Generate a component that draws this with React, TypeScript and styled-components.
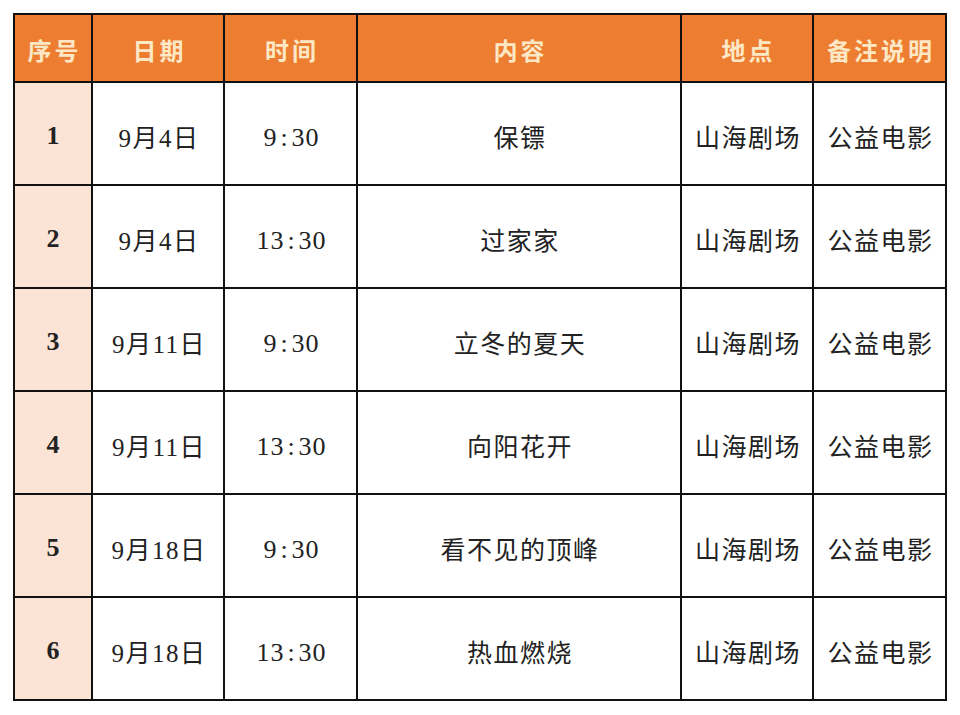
import { Fragment } from 'react';
import styled, { createGlobalStyle } from 'styled-components';

const GlobalStyle = createGlobalStyle`
  body {
    margin: 0;
    background: #ffffff;
  }
`;

const Page = styled.div`
  padding: 13px 0 0 13px;
`;

// black background + 2px gap draws the grid lines
const Grid = styled.div`
  display: grid;
  grid-template-columns: 76px 130px 131px 322px 130px 131px;
  grid-template-rows: 66px repeat(6, 101px);
  gap: 2px;
  padding: 2px;
  width: 934px;
  box-sizing: border-box;
  background: #111;
`;

const HeadCell = styled.div`
  display: flex;
  align-items: center;
  justify-content: center;
  background: #ed7d31;
  color: #fde8c6;
  font-family: 'Liberation Serif', 'Noto Sans CJK SC', serif;
  font-weight: bold;
  font-size: 24px;
  letter-spacing: 3px;
  padding-left: 3px;
  padding-top: 2px;
`;

const Cell = styled.div<{ first?: boolean }>`
  display: flex;
  align-items: center;
  justify-content: center;
  background: ${({ first }) => (first ? '#fbe4d5' : '#ffffff')};
  color: #222;
  font-family: 'Liberation Serif', 'Noto Sans CJK SC', serif;
  font-size: ${({ first }) => (first ? '26px' : '25px')};
  font-weight: ${({ first }) => (first ? 'bold' : 'normal')};
  letter-spacing: ${({ first }) => (first ? '0' : '1.5px')};
  padding-left: ${({ first }) => (first ? '0' : '2px')};
  padding-top: 4px;
`;

const Time = styled.span`
  font-size: 26px;
  letter-spacing: 1px;
  padding-top: 4px;
`;

const Colon = styled.span`
  margin: 0 4px 0 3px;
  letter-spacing: 0;
`;

const headers = ['序号', '日期', '时间', '内容', '地点', '备注说明'];

const rows = [
  ['1', '9月4日', '9:30', '保镖'],
  ['2', '9月4日', '13:30', '过家家'],
  ['3', '9月11日', '9:30', '立冬的夏天'],
  ['4', '9月11日', '13:30', '向阳花开'],
  ['5', '9月18日', '9:30', '看不见的顶峰'],
  ['6', '9月18日', '13:30', '热血燃烧'],
];

export default function App() {
  return (
    <>
      <GlobalStyle />
      <Page>
        <Grid>
          {headers.map((h) => (
            <HeadCell key={h}>{h}</HeadCell>
          ))}
          {rows.map(([no, date, time, title]) => {
            const [h, m] = time.split(':');
            return (
              <Fragment key={no}>
                <Cell first>{no}</Cell>
                <Cell>{date}</Cell>
                <Cell>
                  <Time>
                    {h}
                    <Colon>:</Colon>
                    {m}
                  </Time>
                </Cell>
                <Cell>{title}</Cell>
                <Cell>山海剧场</Cell>
                <Cell>公益电影</Cell>
              </Fragment>
            );
          })}
        </Grid>
      </Page>
    </>
  );
}
